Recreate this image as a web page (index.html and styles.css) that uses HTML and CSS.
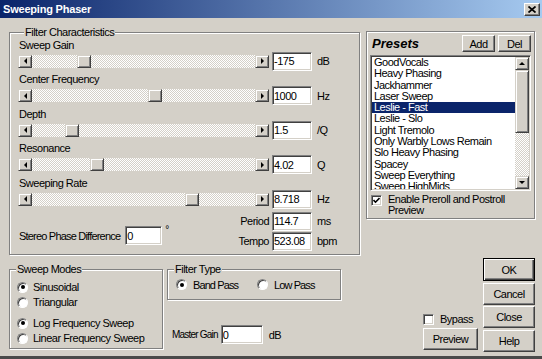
FILE: index.html
```html
<!DOCTYPE html>
<html lang="en">
<head>
    <meta charset="UTF-8">
    <title>Sweeping Phaser</title>
    <link rel="stylesheet" href="styles.css">
</head>
<body>
<div class="window">
    <div class="titlebar">
        <span class="title">Sweeping Phaser</span>
        <span class="close-btn">
            <svg width="8" height="7" viewBox="0 0 8 7"><path d="M0.5 0.5 L7.5 6.5 M7.5 0.5 L0.5 6.5" stroke="#000" stroke-width="1.7"/></svg>
        </span>
    </div>

    <div class="client">
        <div class="top-row">
            <div class="group filter-group">
                <div class="group-title">Filter Characteristics</div>

                <div class="param">
                    <div class="param-label">Sweep Gain</div>
                    <div class="param-row">
                        <div class="slider">
                            <span class="arrow-btn left"></span>
                            <div class="track"><span class="thumb" style="margin-left: 45px"></span></div>
                            <span class="arrow-btn right"></span>
                        </div>
                        <input class="field" type="text" value="-175">
                        <span class="unit">dB</span>
                    </div>
                </div>

                <div class="param">
                    <div class="param-label">Center Frequency</div>
                    <div class="param-row">
                        <div class="slider">
                            <span class="arrow-btn left"></span>
                            <div class="track"><span class="thumb" style="margin-left: 116px"></span></div>
                            <span class="arrow-btn right"></span>
                        </div>
                        <input class="field" type="text" value="1000">
                        <span class="unit">Hz</span>
                    </div>
                </div>

                <div class="param">
                    <div class="param-label">Depth</div>
                    <div class="param-row">
                        <div class="slider">
                            <span class="arrow-btn left"></span>
                            <div class="track"><span class="thumb" style="margin-left: 33px"></span></div>
                            <span class="arrow-btn right"></span>
                        </div>
                        <input class="field" type="text" value="1.5">
                        <span class="unit">/Q</span>
                    </div>
                </div>

                <div class="param">
                    <div class="param-label">Resonance</div>
                    <div class="param-row">
                        <div class="slider">
                            <span class="arrow-btn left"></span>
                            <div class="track"><span class="thumb" style="margin-left: 58px"></span></div>
                            <span class="arrow-btn right"></span>
                        </div>
                        <input class="field" type="text" value="4.02">
                        <span class="unit">Q</span>
                    </div>
                </div>

                <div class="param">
                    <div class="param-label">Sweeping Rate</div>
                    <div class="param-row">
                        <div class="slider">
                            <span class="arrow-btn left"></span>
                            <div class="track"><span class="thumb" style="margin-left: 153px"></span></div>
                            <span class="arrow-btn right"></span>
                        </div>
                        <input class="field" type="text" value="8.718">
                        <span class="unit">Hz</span>
                    </div>
                </div>

                <div class="extra">
                    <div class="stereo">
                        <span class="stereo-label">Stereo Phase Difference</span>
                        <input class="field phase-field" type="text" value="0">
                        <span class="degree">°</span>
                    </div>
                    <span class="extra-label">Period</span>
                    <input class="field" type="text" value="114.7">
                    <span class="unit">ms</span>
                    <span class="extra-label">Tempo</span>
                    <input class="field" type="text" value="523.08">
                    <span class="unit">bpm</span>
                </div>
            </div>

            <div class="group presets">
                <div class="presets-head">
                    <span class="presets-title">Presets</span>
                    <button class="btn small-btn">Add</button>
                    <button class="btn small-btn">Del</button>
                </div>
                <div class="listbox">
                    <ul class="list">
                        <li>GoodVocals</li>
                        <li>Heavy Phasing</li>
                        <li>Jackhammer</li>
                        <li>Laser Sweep</li>
                        <li class="selected">Leslie - Fast</li>
                        <li>Leslie - Slo</li>
                        <li>Light Tremolo</li>
                        <li>Only Warbly Lows Remain</li>
                        <li>Slo Heavy Phasing</li>
                        <li>Spacey</li>
                        <li>Sweep Everything</li>
                        <li>Sweep HighMids</li>
                    </ul>
                    <div class="vscroll">
                        <span class="arrow-btn up"></span>
                        <span class="vthumb"></span>
                        <span class="vtrack"></span>
                        <span class="arrow-btn down"></span>
                    </div>
                </div>
                <div class="check-row">
                    <span class="checkbox">
                        <svg width="7" height="7" viewBox="0 0 7 7"><path d="M0.5 3 L2.5 5.2 L6.5 1" fill="none" stroke="#000" stroke-width="1.6"/></svg>
                    </span>
                    <span class="check-text">Enable Preroll and Postroll Preview</span>
                </div>
            </div>
        </div>

        <div class="bottom-row">
            <div class="group sweep-modes">
                <div class="group-title">Sweep Modes</div>
                <div class="radio-list">
                    <div class="radio-item"><span class="radio on"></span>Sinusoidal</div>
                    <div class="radio-item"><span class="radio"></span>Triangular</div>
                    <div class="radio-item split"><span class="radio on"></span>Log Frequency Sweep</div>
                    <div class="radio-item"><span class="radio"></span>Linear Frequency Sweep</div>
                </div>
            </div>

            <div class="middle">
                <div class="group filter-type">
                    <div class="group-title">Filter Type</div>
                    <div class="radio-row">
                        <div class="radio-item first"><span class="radio on"></span><span class="tight">Band Pass</span></div>
                        <div class="radio-item"><span class="radio"></span><span class="tight">Low Pass</span></div>
                    </div>
                </div>
                <div class="master">
                    <span class="master-label">Master Gain</span>
                    <input class="field master-field" type="text" value="0">
                    <span class="master-unit">dB</span>
                </div>
            </div>

            <div class="preview-col">
                <div class="bypass">
                    <span class="checkbox"></span>
                    <span class="bypass-text">Bypass</span>
                </div>
                <button class="btn preview-btn">Preview</button>
            </div>

            <div class="buttons">
                <button class="btn default">OK</button>
                <button class="btn">Cancel</button>
                <button class="btn">Close</button>
                <button class="btn">Help</button>
            </div>
        </div>
    </div>
</div>
</body>
</html>
```

FILE: styles.css
```css
* {
    box-sizing: border-box;
}
body {
    margin: 0;
    background-color: #d4d0c8;
    font-family: "Liberation Sans", Arial, sans-serif;
    font-size: 11px;
    letter-spacing: -0.5px;
    color: #000;
}
.window {
    width: 542px;
    height: 359px;
    background-color: #d4d0c8;
    border-bottom: 3px solid #4a4a4a;
    overflow: hidden;
}

/* title bar */
.titlebar {
    height: 18px;
    display: flex;
    align-items: center;
    justify-content: space-between;
    padding: 0 2px 0 3px;
    background: linear-gradient(to right, #0a246a, #a6caf0);
}
.title {
    color: #fff;
    font-weight: bold;
    letter-spacing: -0.2px;
}
.close-btn {
    width: 16px;
    height: 13px;
    display: flex;
    align-items: center;
    justify-content: center;
    background-color: #d4d0c8;
    border: 1px solid;
    border-color: #fff #404040 #404040 #fff;
    box-shadow: inset -1px -1px #808080;
}
.close-btn svg {
    display: block;
}

/* layout */
.client {
    height: 338px;
    display: flex;
    flex-direction: column;
}
.top-row {
    height: 237px;
    display: flex;
    align-items: flex-start;
}
.bottom-row {
    height: 101px;
    display: flex;
    align-items: flex-start;
}

/* group boxes */
.group {
    border: 1px solid #808080;
    box-shadow: inset 1px 1px #fff, 1px 1px #fff;
}
.group-title {
    width: fit-content;
    margin: -7.5px 0 0 6px;
    padding: 0 1px;
    line-height: 13px;
    background-color: #d4d0c8;
}

/* filter characteristics */
.filter-group {
    width: 351px;
    height: 223px;
    margin: 14px 0 0 9px;
    padding: 0 8px;
}
.param:first-of-type {
    margin-top: 1px;
}
.param {
    margin-bottom: 2.5px;
}
.param-label {
    height: 13px;
    line-height: 13px;
    padding-left: 1px;
}
.param-row {
    height: 19px;
    display: flex;
    align-items: center;
}
.slider {
    width: 251px;
    height: 13px;
    margin-right: 3px;
    display: flex;
}
.track {
    flex: 1;
    display: flex;
    background-color: #fff;
    background-image: repeating-conic-gradient(#d4d0c8 0 25%, #fff 0 50%);
    background-size: 2px 2px;
}
.arrow-btn,
.thumb,
.vthumb {
    flex: none;
    display: flex;
    align-items: center;
    justify-content: center;
    background-color: #d4d0c8;
    border: 1px solid;
    border-color: #d4d0c8 #404040 #404040 #d4d0c8;
    box-shadow: inset 1px 1px #fff, inset -1px -1px #808080;
}
.arrow-btn {
    width: 14px;
    height: 13px;
}
.thumb {
    width: 14px;
    height: 13px;
}
.arrow-btn::before {
    content: "";
    border-style: solid;
}
.arrow-btn.left::before {
    border-width: 3px 3px 3px 0;
    border-color: transparent #000 transparent transparent;
}
.arrow-btn.right::before {
    border-width: 3px 0 3px 3px;
    border-color: transparent transparent transparent #000;
}
.arrow-btn.up::before {
    border-width: 0 3px 3px 3px;
    border-color: transparent transparent #000 transparent;
}
.arrow-btn.down::before {
    border-width: 3px 3px 0 3px;
    border-color: #000 transparent transparent transparent;
}
.field {
    width: 40px;
    height: 19px;
    margin: 0;
    padding: 0 0 0 1px;
    border: 1px solid;
    border-color: #808080 #fff #fff #808080;
    box-shadow: inset 1px 1px #404040, inset -1px -1px #d4d0c8;
    background-color: #fff;
    font: inherit;
    letter-spacing: inherit;
    color: #000;
    outline: none;
}
.unit {
    padding-left: 5px;
}
.extra {
    width: 329px;
    display: grid;
    grid-template-columns: 1fr auto 40px 35px;
    grid-template-rows: 20px 20px;
    align-items: center;
}
.stereo {
    grid-column: 1;
    grid-row: 1 / 3;
    align-self: end;
    margin-bottom: 6px;
    padding-left: 1px;
    display: flex;
    align-items: center;
}
.stereo-label {
    letter-spacing: -0.8px;
}
.phase-field {
    width: 37px;
    margin-left: 5px;
}
.degree {
    align-self: flex-start;
    margin: -2px 0 0 3px;
    font-size: 10px;
}
.extra-label {
    text-align: right;
    padding-right: 3px;
}

/* presets */
.presets {
    width: 169px;
    height: 188px;
    margin: 13px 0 0 6px;
    padding: 3px 3px 0 3px;
}
.presets-head {
    height: 17px;
    display: flex;
    align-items: center;
}
.presets-title {
    flex: 1;
    margin-left: 2px;
    font-size: 13px;
    font-weight: bold;
    font-style: italic;
    letter-spacing: 0;
}
.btn {
    height: 22px;
    padding: 0;
    background-color: #d4d0c8;
    border: 1px solid;
    border-color: #fff #404040 #404040 #fff;
    box-shadow: inset -1px -1px #808080;
    font: inherit;
    letter-spacing: inherit;
    color: #000;
}
.small-btn {
    width: 33px;
    height: 17px;
    margin-left: 3px;
}
.listbox {
    width: 161px;
    height: 136px;
    margin-top: 3px;
    display: flex;
    border: 1px solid;
    border-color: #808080 #fff #fff #808080;
    box-shadow: inset 1px 1px #404040, inset -1px -1px #d4d0c8;
    background-color: #fff;
    padding: 1px;
}
.list {
    flex: 1;
    margin: 0;
    padding: 0;
    list-style: none;
    overflow: hidden;
}
.list li {
    height: 11.3px;
    line-height: 11.3px;
    padding-left: 2px;
    white-space: nowrap;
}
.list li.selected {
    background-color: #0a246a;
    color: #fff;
}
.vscroll {
    width: 14px;
    display: flex;
    flex-direction: column;
}
.vthumb {
    height: 63px;
}
.vtrack {
    flex: 1;
    background-image: repeating-conic-gradient(#d4d0c8 0 25%, #fff 0 50%);
    background-size: 2px 2px;
}
.check-row {
    margin-top: 3px;
    display: flex;
    align-items: flex-start;
    padding-left: 1px;
}
.checkbox {
    width: 11px;
    height: 11px;
    flex: none;
    display: flex;
    align-items: center;
    justify-content: center;
    border: 1px solid;
    border-color: #808080 #fff #fff #808080;
    box-shadow: inset 1px 1px #404040, inset -1px -1px #d4d0c8;
    background-color: #fff;
}
.check-row .checkbox {
    margin-top: 1px;
}
.checkbox svg {
    display: block;
}
.check-text {
    margin-left: 6px;
    line-height: 11px;
}

/* sweep modes */
.sweep-modes {
    width: 154px;
    height: 80px;
    margin: 14px 0 0 9px;
}
.radio-list {
    margin-top: 4px;
}
.radio-item {
    height: 15px;
    display: flex;
    align-items: center;
    padding-left: 7px;
    white-space: nowrap;
}
.radio-item.split {
    margin-top: 6px;
}
.radio {
    width: 11px;
    height: 11px;
    flex: none;
    margin-right: 5px;
    display: flex;
    align-items: center;
    justify-content: center;
    border-radius: 50%;
    border: 1px solid;
    border-color: #808080 #fff #fff #808080;
    box-shadow: inset 1px 1px #404040;
    background-color: #fff;
}
.radio.on::after {
    content: "";
    width: 4px;
    height: 4px;
    border-radius: 50%;
    background-color: #000;
}

/* filter type + master gain */
.middle {
    width: 174px;
    margin-left: 4px;
}
.filter-type {
    height: 31px;
    margin-top: 14px;
}
.radio-row {
    margin-top: 1.5px;
    display: flex;
}
.radio-row .radio-item {
    padding-left: 0;
}
.radio-row .radio-item.first {
    width: 81px;
    margin-left: 8px;
}
.radio-row .radio {
    margin-right: 6px;
}
.tight {
    letter-spacing: -0.9px;
}
.master {
    margin-top: 25px;
    padding-left: 5px;
    height: 19px;
    display: flex;
    align-items: center;
}
.master-label {
    margin-right: 3px;
    font-size: 10px;
    letter-spacing: -0.8px;
    white-space: nowrap;
}
.master-field {
    width: 42px;
}
.master-unit {
    margin-left: 6px;
}

/* preview column */
.preview-col {
    width: 55px;
    margin-left: 82px;
    align-self: stretch;
    display: flex;
    flex-direction: column;
    justify-content: flex-end;
    padding-bottom: 6px;
}
.bypass {
    height: 12px;
    margin-bottom: 3px;
    display: flex;
    align-items: center;
}
.bypass-text {
    margin-left: 6px;
}
.preview-btn {
    width: 55px;
}

/* dialog buttons */
.buttons {
    width: 52px;
    margin: 3px 0 0 5px;
    display: flex;
    flex-direction: column;
    gap: 1.5px;
}
.buttons .btn {
    width: 52px;
}
.buttons .btn.default {
    height: 23px;
    border: 1px solid #000;
    box-shadow: inset 1px 1px #fff, inset -1px -1px #404040, inset -2px -2px #808080;
}
```
